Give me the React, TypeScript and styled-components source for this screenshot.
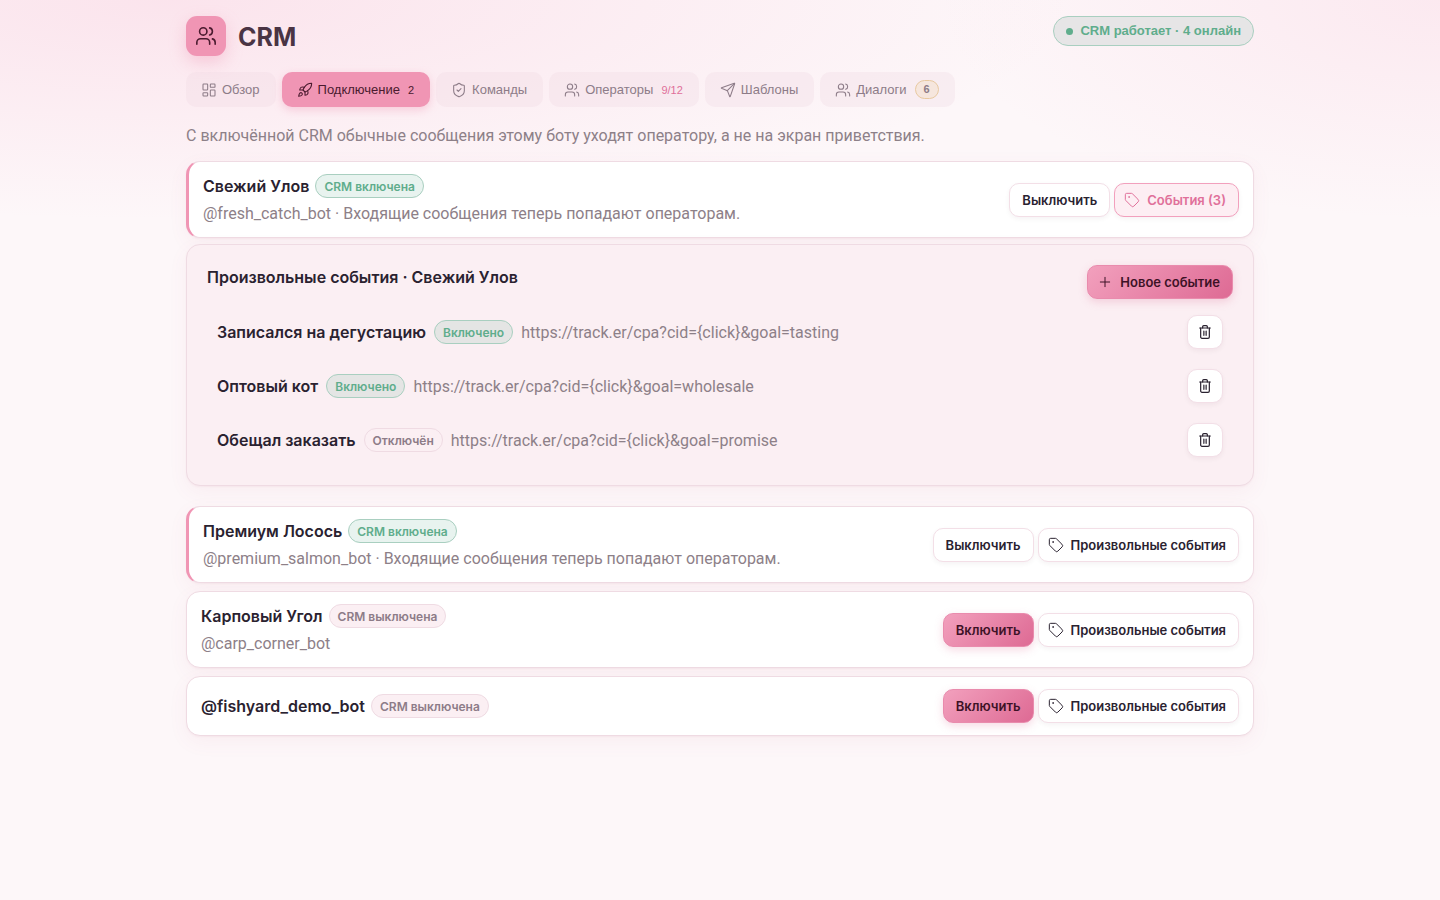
import React from 'react';
import styled, { createGlobalStyle, css } from 'styled-components';
import { LayoutDashboard, Plus, Rocket, Send, ShieldCheck, Tag, Users } from 'lucide-react';

const ui = '"Inter", "Noto Sans", sans-serif';
const reading = '"Roboto", "Noto Sans", sans-serif';
const plain = '"Liberation Sans", Arial, sans-serif';

const GlobalStyle = createGlobalStyle`
  *, *::before, *::after { box-sizing: border-box; }
  body {
    margin: 0;
    min-height: 100vh;
    font-family: ${ui};
    font-size: 16px;
    line-height: 24px;
    color: #2a2230;
    background:
      radial-gradient(ellipse 900px 220px at 12% 0, rgba(244, 160, 192, 0.22), transparent),
      radial-gradient(ellipse 500px 220px at 100% 0, rgba(244, 160, 192, 0.16), transparent),
      #fdf7f9;
  }
  h1, h2, h3, p, ul { margin: 0; padding: 0; }
  svg { flex: none; }
`;

const Page = styled.main`
  max-width: 1100px;
  margin: 0 auto;
  padding: 16px;
`;

const Header = styled.header`
  display: flex;
  align-items: flex-start;
  justify-content: space-between;
`;

const Brand = styled.div`
  display: flex;
  align-items: center;
  gap: 12px;
`;

const Logo = styled.span`
  display: flex;
  align-items: center;
  justify-content: center;
  width: 40px;
  height: 40px;
  border-radius: 11px;
  background: #f095b4;
  color: #4a1a2e;
  box-shadow: 0 6px 16px rgba(240, 149, 180, 0.4);
`;

const Title = styled.h1`
  padding-top: 2px;
  font-size: 25px;
  line-height: 32px;
  font-weight: 700;
  color: #4a3444;
`;

const Status = styled.div`
  display: flex;
  align-items: center;
  gap: 7px;
  height: 30px;
  padding: 0 12px;
  border: 1px solid #a9cfc0;
  border-radius: 15px;
  background: #e6e5e6;
  color: #5fad8c;
  font: 700 13px/20px ${plain};
`;

const Dot = styled.span`
  width: 7px;
  height: 7px;
  border-radius: 50%;
  background: currentColor;
`;

const Tabs = styled.nav`
  display: flex;
  flex-wrap: wrap;
  gap: 6px;
  margin-top: 16px;
`;

const Tab = styled.button<{ $active?: boolean }>`
  display: flex;
  align-items: center;
  gap: 5px;
  height: 35px;
  padding: 0 16px 0 15px;
  border: 0;
  border-radius: 10px;
  background: rgba(240, 215, 225, 0.3);
  color: #8d7c88;
  font: 400 13px/20px ${plain};
  ${(p) => p.$active && css`
    background: #f095b4;
    color: #4a1a2e;
    box-shadow: 0 3px 8px rgba(240, 149, 180, 0.4);
  `}
`;

const TabCount = styled.span<{ $accent?: boolean }>`
  margin-left: 3px;
  font-size: 11px;
  color: ${(p) => (p.$accent ? '#e0709a' : 'inherit')};
`;

const TabBadge = styled.span`
  margin-left: 3px;
  padding: 0 8px;
  border: 1px solid #e8c9a0;
  border-radius: 10px;
  background: #f6e6dd;
  font-size: 11px;
  line-height: 17px;
  font-weight: 700;
`;

const Muted = styled.p`
  padding-top: 2px;
  color: #8d8088;
  font-family: ${reading};
  line-height: 22px;
`;

const Intro = styled.div`
  margin: 16px 0 14px;
`;

const surface = css`
  border: 1px solid #efdbe3;
  border-radius: 14px;
  box-shadow: 0 1px 2px rgba(180, 80, 120, 0.06), 0 6px 20px rgba(180, 80, 120, 0.06);
`;

const BotCard = styled.section<{ $on?: boolean }>`
  ${surface}
  display: flex;
  align-items: center;
  justify-content: space-between;
  gap: 16px;
  margin-bottom: 8px;
  padding: 12px 14px;
  background: #fff;
  ${(p) => p.$on && css`border-left: 3px solid #f095b4;`}
`;

const BotInfo = styled.div`
  display: grid;
  gap: 3px;
`;

const NameRow = styled.div<{ $gap?: number }>`
  display: flex;
  align-items: center;
  gap: ${(p) => p.$gap ?? 6}px;
`;

const Name = styled.h2`
  font-size: 16px;
  line-height: 24px;
  font-weight: 600;
  color: #2a2230;
`;

const Pill = styled.span<{ $tone: 'on' | 'off' | 'clear' }>`
  height: 24px;
  padding: 0 8px;
  border: 1px solid #efdbe3;
  border-radius: 12px;
  background: ${(p) => (p.$tone === 'off' ? '#fbeff3' : 'transparent')};
  color: #8d7c88;
  font-size: 12px;
  line-height: 23px;
  font-weight: 600;
  white-space: nowrap;
  ${(p) => p.$tone === 'on' && css`
    border-color: #a9cfc0;
    background: rgba(95, 173, 140, 0.14);
    color: #5fad8c;
  `}
`;

const Actions = styled.div`
  display: flex;
  gap: 4px;
`;

const Button = styled.button<{ $kind?: 'primary' | 'soft'; $icon?: boolean }>`
  display: flex;
  align-items: center;
  gap: 7px;
  height: 34px;
  padding: 0 12px 0 ${(p) => (p.$icon ? 9 : 12)}px;
  border: 1px solid #f3dfe7;
  border-radius: 10px;
  background: #fff;
  color: #2a2230;
  font: 600 13px/20px ${ui};
  white-space: nowrap;
  box-shadow: 0 2px 5px rgba(60, 20, 40, 0.05);
  ${(p) => p.$kind === 'primary' && css`
    border-color: #e98bad;
    background: linear-gradient(135deg, #f2a0bd, #de6a94);
    color: #3d1226;
    box-shadow: 0 3px 8px rgba(222, 106, 148, 0.25);
  `}
  ${(p) => p.$kind === 'soft' && css`
    border-color: #f2a0bd;
    background: #fdeef3;
    color: #e0709a;
  `}
`;

const IconButton = styled(Button)`
  justify-content: center;
  width: 36px;
  padding: 0;
`;

const Panel = styled.section`
  ${surface}
  margin: -2px 0 20px;
  padding: 20px;
  background: #fbeff3;
`;

const PanelHead = styled.div`
  display: flex;
  align-items: flex-start;
  justify-content: space-between;
  margin-bottom: 8px;
`;

const Events = styled.ul`
  display: grid;
  gap: 4px;
  list-style: none;
`;

const EventRow = styled.li`
  display: flex;
  align-items: center;
  justify-content: space-between;
  padding: 8px 10px;
`;

const events = [
  { name: 'Записался на дегустацию', on: true, url: 'https://track.er/cpa?cid={click}&goal=tasting' },
  { name: 'Оптовый кот', on: true, url: 'https://track.er/cpa?cid={click}&goal=wholesale' },
  { name: 'Обещал заказать', on: false, url: 'https://track.er/cpa?cid={click}&goal=promise' },
];

function TrashIcon() {
  return (
    <svg
      width="16"
      height="16"
      viewBox="0 0 24 24"
      fill="none"
      stroke="currentColor"
      strokeWidth="1.8"
      strokeLinecap="round"
      strokeLinejoin="round"
      aria-hidden="true"
    >
      <path d="M4 6h16" />
      <path d="M8.5 6V4a1.5 1.5 0 0 1 1.5-1.5h4A1.5 1.5 0 0 1 15.500 4v2" />
      <path d="M18.500 6v13.500a2 2 0 0 1-2 2h-9a2 2 0 0 1-2-2V6" />
      <path d="M10.300 10.500v6.500M13.700 10.500v6.500" />
    </svg>
  );
}

interface BotProps {
  name: string;
  note?: string;
  on?: boolean;
  openEvents?: number;
}

function Bot({ name, note, on, openEvents }: BotProps) {
  return (
    <BotCard $on={on}>
      <BotInfo>
        <NameRow>
          <Name>{name}</Name>
          <Pill $tone={on ? 'on' : 'off'}>{on ? 'CRM включена' : 'CRM выключена'}</Pill>
        </NameRow>
        {note && <Muted>{note}</Muted>}
      </BotInfo>
      <Actions>
        <Button type="button" $kind={on ? undefined : 'primary'}>{on ? 'Выключить' : 'Включить'}</Button>
        <Button type="button" $icon $kind={openEvents ? 'soft' : undefined}>
          <Tag size={16} strokeWidth={1.5} />
          {openEvents ? `События (${openEvents})` : 'Произвольные события'}
        </Button>
      </Actions>
    </BotCard>
  );
}

const tabIcon = { size: 16, strokeWidth: 1.6 };

export default function App() {
  return (
    <>
      <GlobalStyle />
      <Page>
        <Header>
          <Brand>
            <Logo><Users size={22} strokeWidth={1.75} /></Logo>
            <Title>CRM</Title>
          </Brand>
          <Status><Dot />CRM работает · 4 онлайн</Status>
        </Header>
        <Tabs>
          <Tab type="button"><LayoutDashboard {...tabIcon} />Обзор</Tab>
          <Tab type="button" $active><Rocket {...tabIcon} />Подключение<TabCount>2</TabCount></Tab>
          <Tab type="button"><ShieldCheck {...tabIcon} />Команды</Tab>
          <Tab type="button"><Users {...tabIcon} />Операторы<TabCount $accent>9/12</TabCount></Tab>
          <Tab type="button"><Send {...tabIcon} />Шаблоны</Tab>
          <Tab type="button"><Users {...tabIcon} />Диалоги<TabBadge>6</TabBadge></Tab>
        </Tabs>
        <Intro>
          <Muted>С включённой CRM обычные сообщения этому боту уходят оператору, а не на экран приветствия.</Muted>
        </Intro>
        <Bot name="Свежий Улов" on openEvents={3} note="@fresh_catch_bot · Входящие сообщения теперь попадают операторам." />
        <Panel>
          <PanelHead>
            <Name>Произвольные события · Свежий Улов</Name>
            <Button type="button" $icon $kind="primary"><Plus size={16} strokeWidth={1.5} />Новое событие</Button>
          </PanelHead>
          <Events>
            {events.map((e) => (
              <EventRow key={e.name}>
                <NameRow $gap={8}>
                  <Name as="h3">{e.name}</Name>
                  <Pill $tone={e.on ? 'on' : 'clear'}>{e.on ? 'Включено' : 'Отключён'}</Pill>
                  <Muted>{e.url}</Muted>
                </NameRow>
                <IconButton type="button" aria-label={`Удалить: ${e.name}`}><TrashIcon /></IconButton>
              </EventRow>
            ))}
          </Events>
        </Panel>
        <Bot name="Премиум Лосось" on note="@premium_salmon_bot · Входящие сообщения теперь попадают операторам." />
        <Bot name="Карповый Угол" note="@carp_corner_bot" />
        <Bot name="@fishyard_demo_bot" />
      </Page>
    </>
  );
}
